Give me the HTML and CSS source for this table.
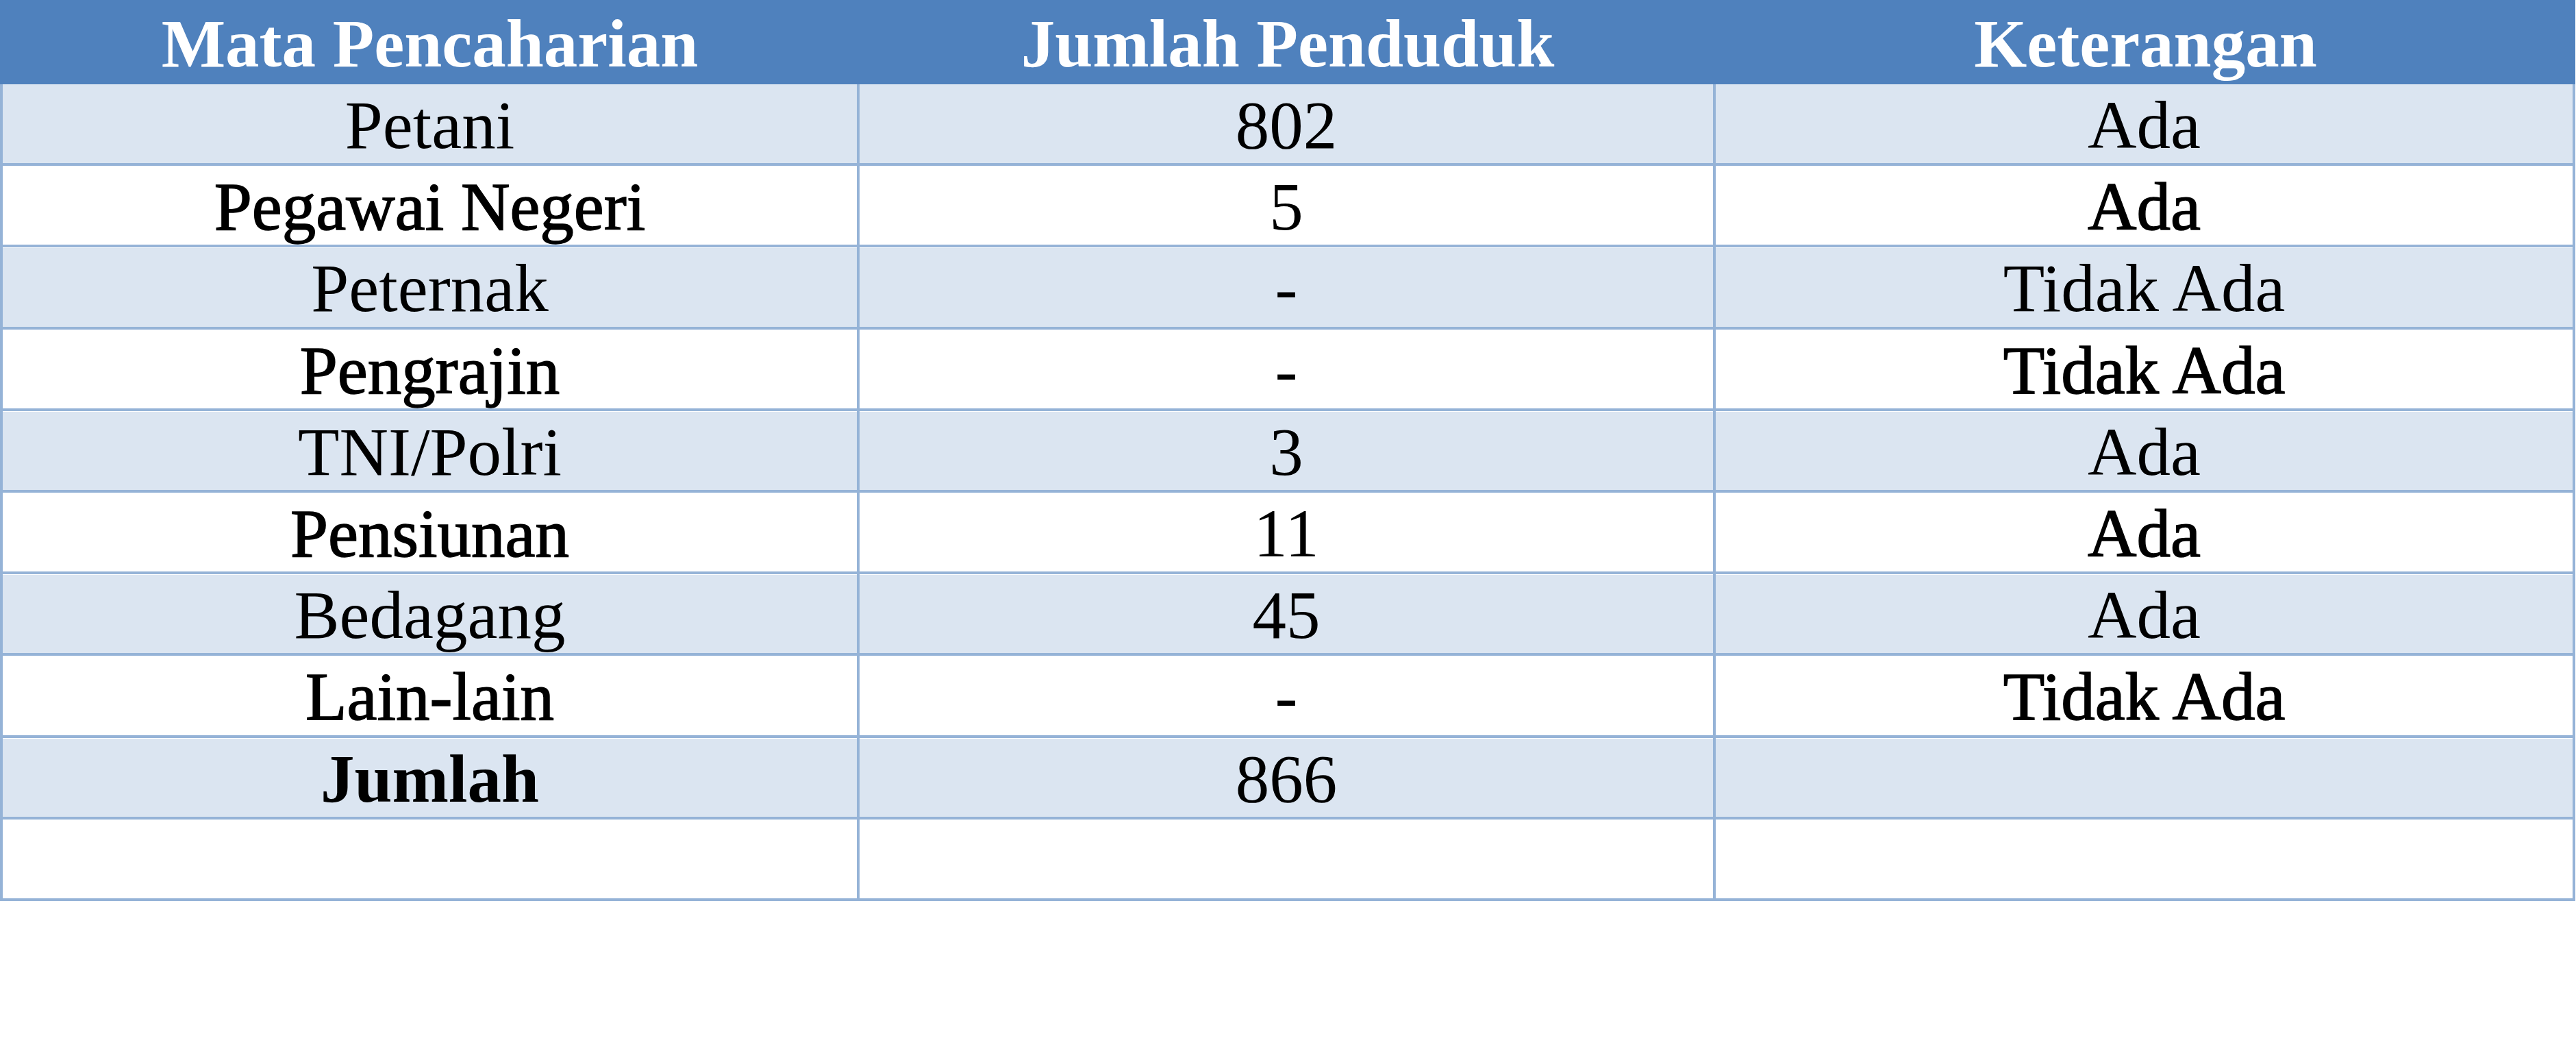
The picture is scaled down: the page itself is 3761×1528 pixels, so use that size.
FILE: index.html
```html
<!DOCTYPE html>
<html lang="id">
<head>
<meta charset="utf-8">
<title>Mata Pencaharian</title>
<link rel="stylesheet" href="styles.css">
</head>
<body>
<table class="grid">
  <colgroup>
    <col class="c1">
    <col class="c2">
    <col class="c3">
  </colgroup>
  <thead>
    <tr>
      <th>Mata Pencaharian</th>
      <th>Jumlah Penduduk</th>
      <th>Keterangan</th>
    </tr>
  </thead>
  <tbody>
    <tr class="band first"><td>Petani</td><td>802</td><td>Ada</td></tr>
    <tr class="plain"><td class="heavy">Pegawai Negeri</td><td>5</td><td class="heavy">Ada</td></tr>
    <tr class="band"><td>Peternak</td><td>-</td><td>Tidak Ada</td></tr>
    <tr class="plain"><td class="heavy">Pengrajin</td><td>-</td><td class="heavy">Tidak Ada</td></tr>
    <tr class="band"><td>TNI/Polri</td><td>3</td><td>Ada</td></tr>
    <tr class="plain"><td class="heavy">Pensiunan</td><td>11</td><td class="heavy">Ada</td></tr>
    <tr class="band"><td>Bedagang</td><td>45</td><td>Ada</td></tr>
    <tr class="plain"><td class="heavy">Lain-lain</td><td>-</td><td class="heavy">Tidak Ada</td></tr>
    <tr class="band"><td class="total">Jumlah</td><td>866</td><td></td></tr>
    <tr class="plain"><td>&nbsp;</td><td></td><td></td></tr>
  </tbody>
</table>
</body>
</html>
```
FILE: styles.css
```css
html, body {
  margin: 0;
  padding: 0;
  background: #ffffff;
}

.grid {
  width: 3760px;
  table-layout: fixed;
  border-collapse: separate;
  border-spacing: 0;
  font-family: "Liberation Serif", "Times New Roman", serif;
  font-size: 99px;
  color: #000000;
}

.c1 { width: 1255px; }
.c2 { width: 1250px; }
.c3 { width: 1255px; }

.grid th {
  background: #4f81bd;
  color: #ffffff;
  font-weight: bold;
  text-align: center;
  padding: 4px 0 0;
  line-height: 119px;
  white-space: nowrap;
}

.grid td {
  text-align: center;
  padding: 4px 0 0;
  line-height: 111.2px;
  white-space: nowrap;
  border-right: 4px solid #95b3d7;
  border-bottom: 4px solid #95b3d7;
}

.grid td:first-child {
  border-left: 4px solid #95b3d7;
}

.band td {
  background: #dbe5f1;
  box-shadow: inset 0 1px 0 #ffffff;
}

.band.first td {
  box-shadow: none;
}

.plain td {
  background: #ffffff;
}

.heavy {
  -webkit-text-stroke: 1.5px #000000;
}

.total {
  font-weight: bold;
}
```
